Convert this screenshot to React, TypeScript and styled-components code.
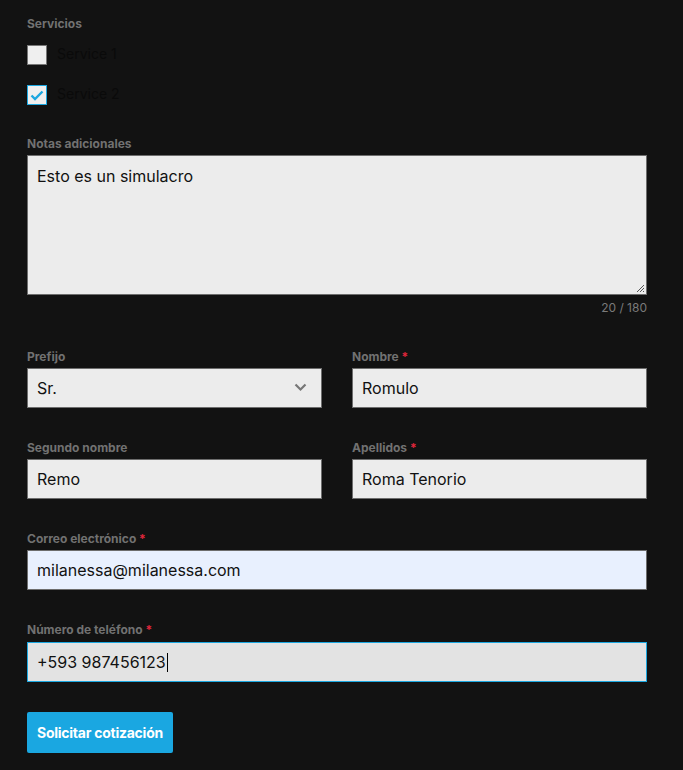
import React from "react";
import styled, { createGlobalStyle } from "styled-components";

const Global = createGlobalStyle`
  html, body { margin: 0; padding: 0; background: #121212; }
  body { font-family: Inter, "Noto Sans", Arial, sans-serif; }
  * { box-sizing: border-box; }
`;

const Form = styled.form`
  width: 683px;
  padding: 16px 36px 16px 27px;
  display: flex;
  flex-direction: column;
`;

const Label = styled.div`
  font-size: 12px;
  line-height: 16px;
  font-weight: 700;
  color: #717171;
  margin-bottom: 3px;
`;

const Req = styled.span`
  color: #e0263b;
`;

const Section = styled.div<{ $mb?: number }>`
  display: flex;
  flex-direction: column;
  margin-bottom: ${(p) => p.$mb ?? 32}px;
`;

const CheckList = styled.div`
  display: flex;
  flex-direction: column;
  gap: 20px;
  margin-top: 10px;
`;

const CheckRow = styled.label`
  display: flex;
  align-items: center;
  gap: 10px;
  height: 20px;
  font-size: 14px;
  color: #0a0a0a;
`;

const CheckText = styled.span`
  margin-top: -3px;
`;

const Box = styled.span<{ $checked?: boolean }>`
  width: 20px;
  height: 20px;
  background: #efefef;
  border: 1px solid ${(p) => (p.$checked ? "#1ba7e0" : "#767676")};
  display: flex;
  align-items: center;
  justify-content: center;
`;

const TextArea = styled.div`
  height: 140px;
  background: #ececec;
  border: 1px solid #6d6d6d;
  padding: 10px 9px;
  font-size: 16px;
  line-height: 20px;
  color: #111;
  position: relative;
`;

const Grip = styled.svg`
  position: absolute;
  right: 1px;
  bottom: 1px;
`;

const Counter = styled.div`
  text-align: right;
  font-size: 12px;
  line-height: 16px;
  color: #7a7a7a;
  margin-top: 5px;
`;

const Grid = styled.div`
  display: grid;
  grid-template-columns: 1fr 1fr;
  column-gap: 30px;
`;

const Input = styled.div<{ $bg?: string; $focus?: boolean }>`
  height: 40px;
  background: ${(p) => p.$bg ?? "#ececec"};
  border: 1px solid ${(p) => (p.$focus ? "#1ba7e0" : "#6d6d6d")};
  padding: 0 9px;
  display: flex;
  align-items: center;
  font-size: 16px;
  color: #111;
  position: relative;
`;

const Caret = styled.span`
  display: inline-block;
  width: 1px;
  height: 19px;
  background: #000;
  margin-left: 1px;
`;

const Chevron = styled.svg`
  position: absolute;
  right: 14px;
  top: 14px;
`;

const Button = styled.button`
  align-self: flex-start;
  margin-top: -2px;
  height: 41px;
  padding: 0 10px;
  white-space: nowrap;
  border: none;
  border-radius: 2px;
  background: #1aa7e1;
  color: #fff;
  font-family: Inter, Arial, sans-serif;
  font-size: 14px;
  font-weight: 700;
  letter-spacing: -0.25px;
`;

export default function App() {
  return (
    <>
      <Global />
      <Form onSubmit={(e) => e.preventDefault()}>
        <Section $mb={31}>
          <Label>Servicios</Label>
          <CheckList>
            <CheckRow>
              <Box />
              <CheckText>Service 1</CheckText>
            </CheckRow>
            <CheckRow>
              <Box $checked>
                <svg width="14" height="11" viewBox="0 0 14 11">
                  <path d="M1.5 5.5 L5 9 L12.5 1.5" fill="none" stroke="#1ba7e0" strokeWidth="2.4" />
                </svg>
              </Box>
              <CheckText>Service 2</CheckText>
            </CheckRow>
          </CheckList>
        </Section>

        <Section $mb={33}>
          <Label>Notas adicionales</Label>
          <TextArea>
            Esto es un simulacro
            <Grip width="10" height="10" viewBox="0 0 10 10">
              <path d="M9 2 L2 9 M9 5 L5 9 M9 8 L8 9" stroke="#555" strokeWidth="1" />
            </Grip>
          </TextArea>
          <Counter>20 / 180</Counter>
        </Section>

        <Grid>
          <Section>
            <Label>Prefijo</Label>
            <Input>
              Sr.
              <Chevron width="13" height="9" viewBox="0 0 13 9">
                <path d="M1.5 1.5 L6.5 6.5 L11.5 1.5" fill="none" stroke="#777" strokeWidth="2.2" />
              </Chevron>
            </Input>
          </Section>
          <Section>
            <Label>
              Nombre <Req>*</Req>
            </Label>
            <Input>Romulo</Input>
          </Section>
          <Section>
            <Label>Segundo nombre</Label>
            <Input>Remo</Input>
          </Section>
          <Section>
            <Label>
              Apellidos <Req>*</Req>
            </Label>
            <Input>Roma Tenorio</Input>
          </Section>
        </Grid>

        <Section>
          <Label>
            Correo electrónico <Req>*</Req>
          </Label>
          <Input $bg="#e8f0fe">milanessa@milanessa.com</Input>
        </Section>

        <Section>
          <Label style={{ marginBottom: 4 }}>
            Número de teléfono <Req>*</Req>
          </Label>
          <Input $bg="#e3e3e3" $focus>
            +593 987456123<Caret />
          </Input>
        </Section>

        <Button type="submit">Solicitar cotización</Button>
      </Form>
    </>
  );
}
